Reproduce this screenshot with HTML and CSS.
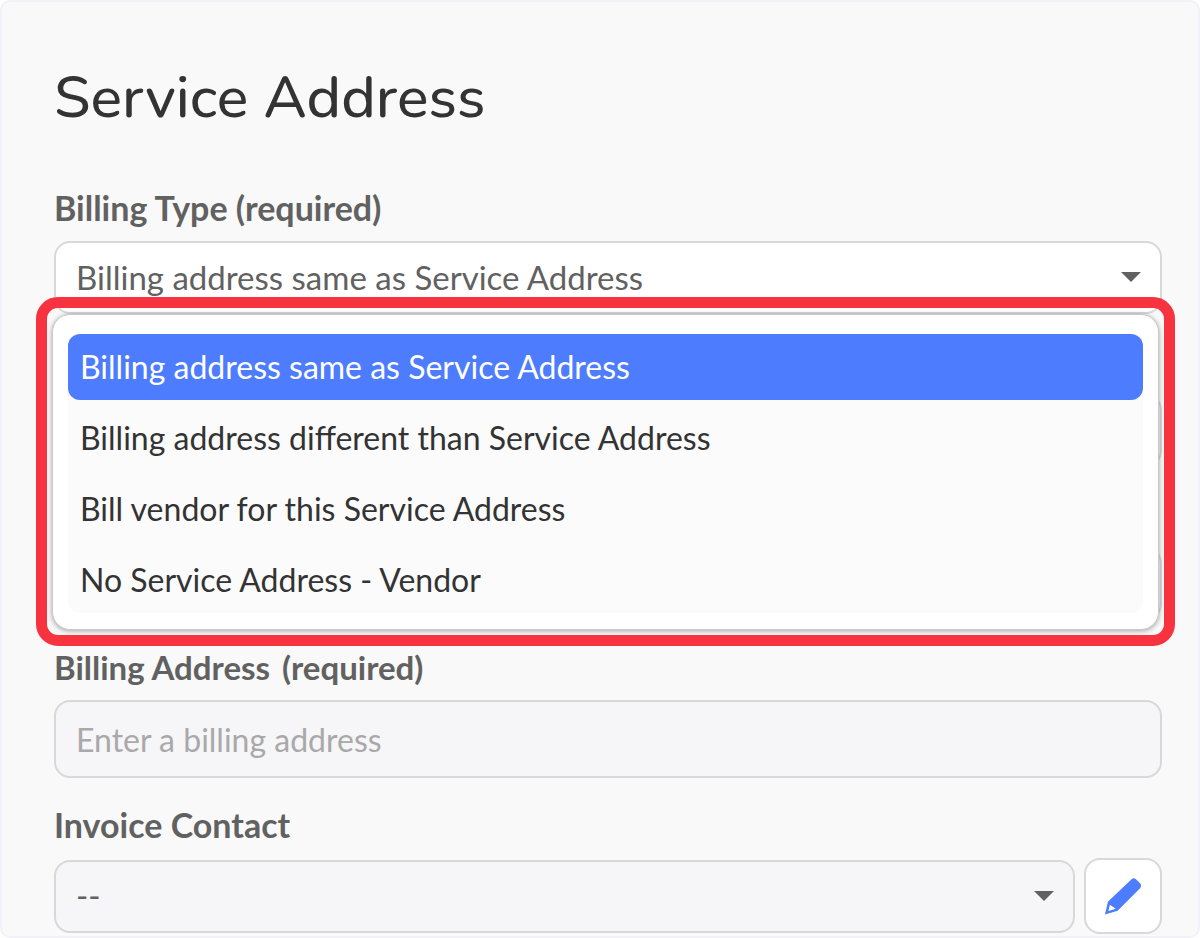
FILE: index.html
```
<!DOCTYPE html>
<html lang="en">

<head>
    <meta charset="UTF-8">
    <meta name="viewport" content="width=device-width, initial-scale=1.0">
    <title>Service Address</title>
    <link rel="stylesheet" href="styles.css">
</head>

<body>

    <form class="card">
        <h1>Service Address</h1>

        <div class="field">
            <label for="billingType">Billing Type (required)</label>
            <div class="select-box">
                <select id="billingType">
                    <option>Billing address same as Service Address</option>
                </select>
                <svg class="caret" viewBox="0 0 20 10"><path d="M0 0h20L10 10z"/></svg>

                <!-- Open dropdown -->
                <div class="menu">
                    <ul class="menu-list" role="listbox" aria-label="Billing Type">
                        <li class="option selected" role="option" aria-selected="true">Billing address same as Service Address</li>
                        <li class="option" role="option">Billing address different than Service Address</li>
                        <li class="option" role="option">Bill vendor for this Service Address</li>
                        <li class="option" role="option">No Service Address - Vendor</li>
                    </ul>
                </div>
                <div class="highlight"></div>
            </div>
        </div>

        <!-- Fields covered by the dropdown -->
        <div class="field covered">
            <input type="text" aria-label="Billing Name" disabled>
        </div>
        <div class="field covered">
            <input type="text" aria-label="Attention" disabled>
        </div>

        <div class="field address">
            <label for="billingAddress">Billing Address <span class="required">(required)</span></label>
            <input type="text" id="billingAddress" placeholder="Enter a billing address">
        </div>

        <div class="field">
            <label for="invoiceContact">Invoice Contact</label>
            <div class="row">
                <div class="select-box">
                    <select id="invoiceContact" class="muted">
                        <option>--</option>
                    </select>
                    <svg class="caret" viewBox="0 0 20 10"><path d="M0 0h20L10 10z"/></svg>
                </div>
                <button type="button" class="edit-btn" aria-label="Edit contact">
                    <svg viewBox="0 0 40 40">
                        <path fill="#4d7cfe" fill-rule="evenodd" d="M28 2.500Q30.500 0 33 2.500L37 6.500Q39 9 37 11.500L14 34.500L1 38.500L4 25.500ZM6 28.500L4.500 34.800L12 32.500Z"/>
                    </svg>
                </button>
            </div>
        </div>
    </form>

</body>

</html>
```
FILE: styles.css
```
* {
    box-sizing: border-box;
}

body {
    margin: 0;
    background-color: #fff;
    font-family: Lato, sans-serif;
    font-size: 33px;
    color: #616161;
}

.card {
    min-height: 100vh;
    padding: 58px 36px 0 52px;
    background-color: #f9f9f9;
    border: 2px solid #f1f1f7;
    border-radius: 10px;
}

h1 {
    margin: 0 0 53px;
    font-family: Nunito, Lato, sans-serif;
    font-size: 59px;
    font-weight: 500;
    line-height: 76px;
    color: #333;
}

.field {
    margin-bottom: 28px;
}

.field:last-child {
    margin-bottom: 0;
}

.covered {
    padding-top: 52px;
}

label {
    display: block;
    margin-bottom: 14px;
    font-size: 34px;
    font-weight: bold;
    line-height: 38px;
}

select,
input {
    display: block;
    width: 100%;
    height: 73px;
    padding: 0 20px 2px;
    font: inherit;
    color: #616161;
    background-color: #fff;
    border: 2px solid #d8d8d8;
    border-radius: 16px;
    appearance: none;
}

input,
select.muted {
    background-color: #f6f6f9;
}

.address label {
    font-size: 33px;
}

.address .required {
    margin-left: 4px;
}

.address input {
    height: 78px;
    padding-bottom: 0;
    font-size: 32px;
}

input::placeholder {
    color: #a9a9a9;
    opacity: 1;
}

.select-box {
    position: relative;
    flex: 1;
}

.caret {
    position: absolute;
    top: 31px;
    right: 21px;
    width: 20px;
    height: 10px;
    fill: #616161;
}

.row {
    display: flex;
    align-items: center;
    gap: 9px;
}

.edit-btn {
    display: flex;
    align-items: center;
    justify-content: center;
    width: 78px;
    height: 76px;
    padding: 0;
    background-color: #fff;
    border: 2px solid #d8d8d8;
    border-radius: 16px;
    cursor: pointer;
}

.edit-btn svg {
    width: 39px;
    height: 39px;
}

.menu {
    position: absolute;
    top: 73px;
    left: -2px;
    right: 3px;
    z-index: 1;
    padding: 19px 15px 16px;
    background-color: #fff;
    border: 1px solid #c6cac9;
    border-radius: 18px;
    box-shadow: 0 1px 5px rgba(0, 0, 0, 0.35);
}

.menu-list {
    display: flex;
    flex-direction: column;
    gap: 5px;
    margin: 0;
    padding: 0;
    list-style: none;
    background-color: #fbfbfb;
    border-radius: 12px;
}

.option {
    padding: 0 12px;
    border-radius: 12px;
    font-size: 32px;
    line-height: 66px;
    color: #333;
}

.option.selected {
    background-color: #4d7cfe;
    color: #fff;
}

/* Red frame around the open dropdown */
.highlight {
    position: absolute;
    top: 56px;
    left: -18px;
    right: -13px;
    z-index: 2;
    height: 349px;
    border: 11px solid #f73340;
    border-radius: 22px;
    pointer-events: none;
}
```
